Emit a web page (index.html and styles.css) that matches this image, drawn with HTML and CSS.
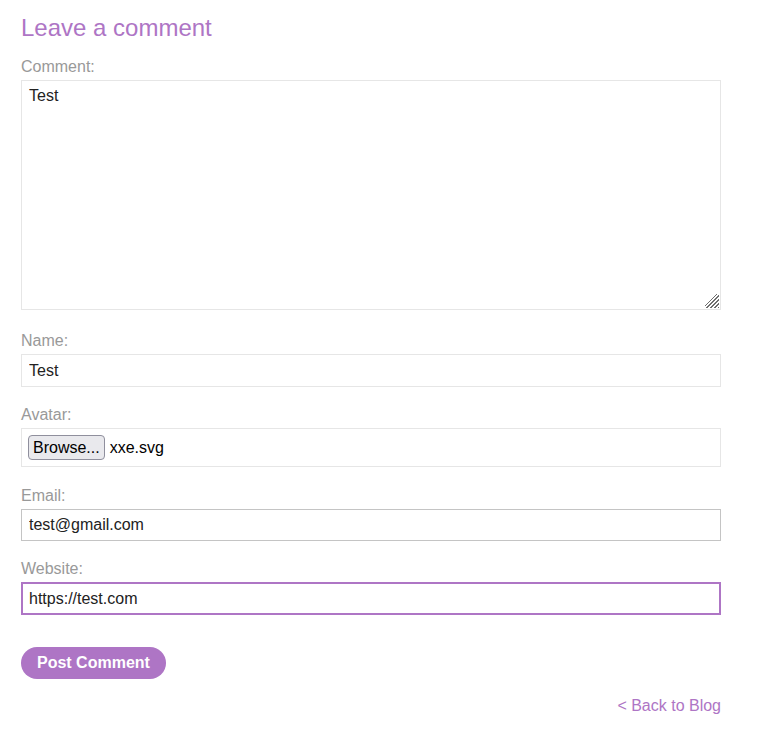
FILE: index.html
```html
<!DOCTYPE html>
<html lang="en">
<head>
    <meta charset="UTF-8">
    <meta name="viewport" content="width=device-width, initial-scale=1.0">
    <title>Leave a comment</title>
    <link rel="stylesheet" href="styles.css">
</head>
<body>
    <div class="container">
        <h1>Leave a comment</h1>
        <form class="comment-form" onsubmit="return false">
            <label for="comment">Comment:</label>
            <textarea id="comment" class="field area">Test</textarea>

            <label for="name">Name:</label>
            <input type="text" id="name" class="field" value="Test">

            <label>Avatar:</label>
            <div class="field file-box">
                <span class="browse">Browse...</span>
                <span class="file-name">xxe.svg</span>
            </div>

            <label for="email">Email:</label>
            <input type="text" id="email" class="field email" value="test@gmail.com">

            <label for="website">Website:</label>
            <input type="text" id="website" class="field focused" value="https://test.com">

            <button class="post-btn">Post Comment</button>
        </form>
        <div class="back-link"><a href="#">&lt; Back to Blog</a></div>
    </div>
</body>
</html>
```

FILE: styles.css
```css
body {
    margin: 0;
    padding: 0;
    font-family: 'Liberation Sans', Arial, sans-serif;
    background: #fff;
    color: #333;
}

.container {
    width: 700px;
    margin: 0 21px;
}

h1 {
    margin: 0;
    padding-top: 14px;
    font-size: 24px;
    line-height: 28px;
    font-weight: normal;
    color: #ae75c5;
}

.comment-form {
    display: flex;
    flex-direction: column;
    margin-top: 15px;
}

label {
    font-size: 16px;
    line-height: 20px;
    color: #999;
    margin-bottom: 3px;
}

.field {
    box-sizing: border-box;
    width: 700px;
    margin: 0 0 18px 0;
    border: 1px solid #e6e6e6;
    font-family: 'Liberation Sans', Arial, sans-serif;
    font-size: 16px;
    color: #222;
    padding: 0 7px;
    height: 33px;
    background: #fff;
    outline: none;
}

/* textarea with a drawn resize grip */
.area {
    height: 230px;
    margin-bottom: 21px;
    padding: 5px 7px;
    resize: none;
    line-height: 20px;
    background:
        linear-gradient(135deg, #fff 42%, transparent 42%) right 1px bottom 1px / 14px 14px no-repeat,
        repeating-linear-gradient(135deg, transparent 0 1.6px, #6f6f6f 1.6px 2.9px) right 1px bottom 1px / 14px 14px no-repeat,
        #fff;
}

.file-box {
    display: flex;
    align-items: center;
    height: 39px;
    padding: 0 6px;
    gap: 5px;
    margin-bottom: 19px;
}

.browse {
    font-size: 16px;
    padding: 2px 4px 1px;
    background: #e9e9ed;
    border: 1px solid #8f8f9d;
    border-radius: 4px;
    color: #000;
    line-height: 20px;
}

.file-name {
    color: #000;
}

.email {
    border-color: #c4c4c4;
    height: 32px;
}

.focused {
    border: 2px solid #ae75c5;
    height: 33px;
    padding: 0 6px;
}

.post-btn {
    align-self: flex-start;
    margin-top: 14px;
    height: 32px;
    padding: 0 16px;
    border: none;
    border-radius: 16px;
    background: #ae75c5;
    color: #fff;
    font-family: 'Liberation Sans', Arial, sans-serif;
    font-size: 16px;
    font-weight: bold;
    cursor: pointer;
}

.back-link {
    text-align: right;
    margin-top: 17px;
    font-size: 16px;
    line-height: 20px;
}

.back-link a {
    color: #ae75c5;
    text-decoration: none;
}
```
